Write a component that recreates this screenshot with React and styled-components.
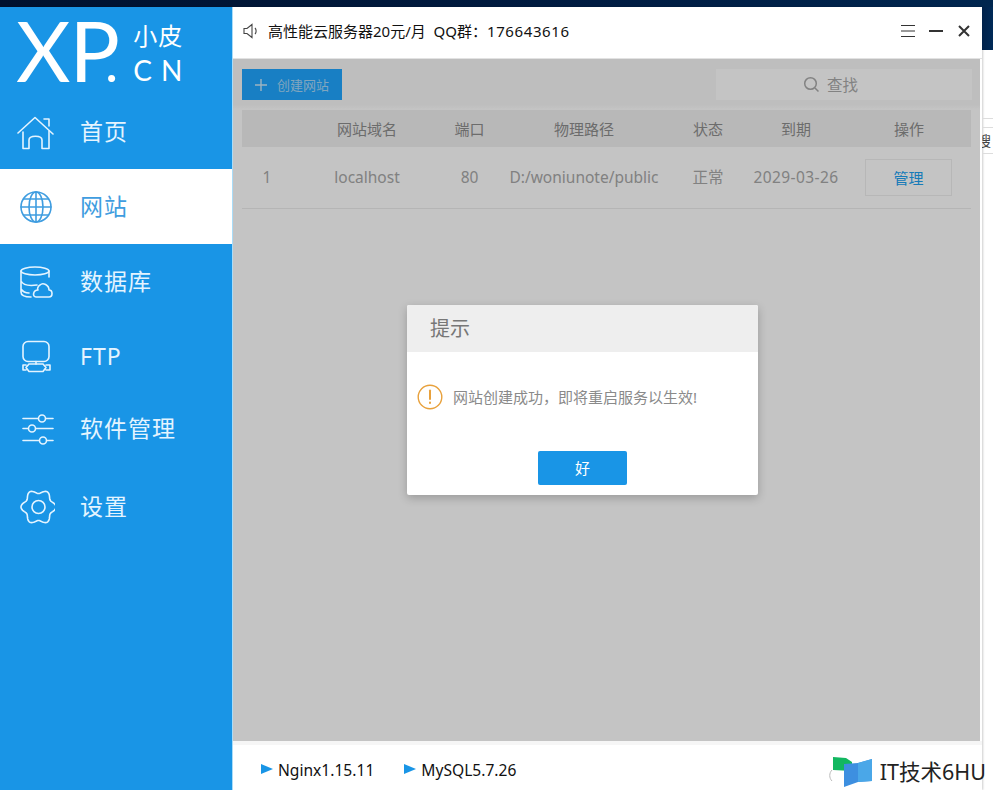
import React from "react";
import styled, { createGlobalStyle } from "styled-components";

const Global = createGlobalStyle`
  html, body { margin: 0; padding: 0; background: #fff; }
  * { box-sizing: border-box; }
  body { font-family: "Noto Sans", "Noto Sans CJK SC", sans-serif; }
`;

const CJK = `"Noto Sans", "Noto Sans CJK SC", sans-serif`;

const Page = styled.div`
  width: 993px; height: 790px; overflow: hidden; position: relative;
  display: flex; flex-direction: column; background: #fff;
`;
const TopStrip = styled.div`
  height: 7px; flex: none;
  background: linear-gradient(90deg, #00112e, #001c42 60%, #00264f);
`;
const Desk = styled.div`display: flex; flex: 1; min-height: 0;`;
const Windowed = styled.div`
  width: 982px; flex: none; display: flex; box-shadow: 1px 0 2px rgba(0,0,0,.2);
`;
const Sidebar = styled.nav`width: 232px; flex: none; background: #1995e6; display: flex; flex-direction: column;`;
const Logo = styled.div`height: 87px; display: flex; padding-left: 16px; color: #fff;`;
const LogoMark = styled.div`
  font: 400 84px/85px Lato, sans-serif; letter-spacing: -1px; height: 85px; flex: none; white-space: nowrap;
`;
const LogoDot = styled.span`font-size: 56px; margin-left: -14px; letter-spacing: 0;`;
const LogoSide = styled.div`
  margin-left: 15px; display: flex; flex-direction: column; padding-top: 13px;
`;
const LogoCn = styled.div`font: 400 24px/30px "Noto Sans CJK SC", sans-serif; letter-spacing: 1px;`;
const LogoEn = styled.div`font: 400 28px/34px Lato, sans-serif; letter-spacing: 9px; margin-top: 3px; white-space: nowrap;`;

const NavItem = styled.div`
  height: 75px; display: flex; align-items: center; padding-left: 17px;
  padding-bottom: ${p => p.$lift || 0}px;
  background: ${p => (p.$active ? "#fff" : "transparent")};
  color: ${p => (p.$active ? "#3f9de0" : "#e4f4ff")};
`;
const NavLabel = styled.span`
  margin: 0 0 2px 25px; font: 400 23px/30px ${CJK}; letter-spacing: 1px;
`;
const IconSvg = styled.svg`
  width: 38px; height: 38px; flex: none; fill: none; stroke: currentColor; stroke-width: 1.6;
  stroke-linecap: round; stroke-linejoin: round;
`;

const Main = styled.main`flex: 1; min-width: 0; display: flex; flex-direction: column; border-left: 1px solid #a9dcf8;`;
const Header = styled.header`
  height: 52px; flex: none; display: flex; align-items: center; padding: 0 10px 4px 10px; background: #fff;
  border-bottom: 1px solid #e2e2e2;
`;
const Notice = styled.div`
  margin-left: 10px; font: 400 15px/20px ${CJK}; color: #111; flex: 1; white-space: pre;
`;
const Digits = styled.span`letter-spacing: .6px;`;
const WinBtn = styled.svg`
  width: 16px; height: 16px; margin-left: 12px; fill: none; stroke: #333; flex: none;
`;

const Content = styled.section`
  flex: 1; min-height: 0; position: relative; padding: 10px 8px 0 9px; margin-right: 2px;
  background: linear-gradient(#f8f8f8, #f8f8f8 46px, #fff 50px);
`;
const Toolbar = styled.div`display: flex; justify-content: space-between; height: 31px; width: 730px;`;
const CreateBtn = styled.div`
  width: 100px; height: 31px; background: #20a6ff; color: #a8d8f8; display: flex; align-items: center;
  padding-left: 12px; font: 400 13px/16px ${CJK};
  svg { margin-right: 9px; }
`;
const SearchBox = styled.div`
  width: 256px; height: 31px; background: #fff; color: #aaa; display: flex; align-items: center;
  padding-left: 87px; font: 400 15.5px/18px ${CJK};
  svg { margin-right: 7px; }
`;
const Grid = styled.div`
  display: grid; grid-template-columns: 50px 150px 55px 174px 74px 102px 124px; width: 729px; align-items: center;
  justify-items: center;
`;
const HeadRow = styled(Grid)`
  margin-top: 10px; height: 37px; background: #f0f0f0; color: #8d8d8d; font: 400 15px/20px ${CJK};
`;
const BodyRow = styled(Grid)`
  height: 62px; color: #a8a8a8; font: 400 15.5px/20px ${CJK}; border-bottom: 1px solid #ececec; padding-bottom: 1px;
`;
const DateCell = styled.span`letter-spacing: .4px;`;
const ManageBtn = styled.div`
  width: 87px; height: 37px; border: 1px solid #eee; color: #20a0f0; display: flex; align-items: center;
  justify-content: center; font: 400 15px/20px ${CJK}; margin-right: 1px; padding-top: 2px;
`;
const Dim = styled.div`position: absolute; inset: 0; background: rgba(0,0,0,.23);`;
const Dialog = styled.div`
  position: absolute; left: 174px; top: 246px; width: 351px; height: 190px; background: #fff; border-radius: 2px;
  box-shadow: 0 3px 10px rgba(0,0,0,.22); display: flex; flex-direction: column; overflow: hidden;
`;
const DialogHead = styled.div`
  height: 47px; flex: none; background: #eee; color: #777; padding-left: 23px; display: flex; align-items: center;
  font: 400 20px/24px ${CJK};
`;
const DialogBody = styled.div`
  flex: 1; display: flex; align-items: flex-start; padding: 32px 0 0 10px; color: #8a8a8a; font: 400 15px/26px ${CJK};
`;
const DialogText = styled.span`margin-left: 10px; white-space: nowrap;`;
const OkBtn = styled.div`
  width: 89px; height: 34px; margin: 0 0 10px 131px; background: #1995e6; color: #fff; border-radius: 2px;
  display: flex; align-items: center; justify-content: center; font: 400 15px/20px ${CJK}; flex: none;
`;

const Footer = styled.footer`
  height: 49px; flex: none; background: #fff; border-top: 4px solid #f6f6f6; display: flex; align-items: center;
  padding: 5px 0 0 28px; font: 400 15.6px/20px ${CJK}; color: #111;
`;
const Service = styled.div`
  display: flex; align-items: center; margin-right: 30px;
  &::before {
    content: ""; width: 0; height: 0; margin-right: 5px; margin-top: -3px;
    border-left: 12px solid #1995e6; border-top: 5.5px solid transparent; border-bottom: 5.5px solid transparent;
  }
`;

const Behind = styled.aside`
  flex: 1; min-width: 0; display: flex; flex-direction: column; overflow: hidden;
`;
const BehindTop = styled.div`
  height: 43px; flex: none;
  background: linear-gradient(90deg, #00214a, #002a58);
`;
const BehindTab = styled.div`
  margin-top: 68px; height: 9px; border-top: 1px solid #ddd;
`;
const BehindField = styled.div`
  height: 27px; border: 1px solid #ddd; border-width: 1px 0; font: 400 14px/25px "Noto Sans CJK SC", sans-serif; color: #444;
  text-indent: -5px; white-space: nowrap; overflow: hidden;
`;

const Watermark = styled.div`
  position: absolute; right: 7px; bottom: 3px; display: flex; align-items: center; color: #222;
  font: 400 21.5px/30px ${CJK};
  svg { margin-right: 7px; }
`;

const House = () => (
  <IconSvg viewBox="0 0 38 38">
    <path d="M1 20 L18 4.5 L36 21 M27 6 h5 v7" />
    <path d="M6 19 V35.5 H12 V27 C12 22 25 22 25 27 V35.5 H32 V18" />
  </IconSvg>
);
const Globe = () => (
  <IconSvg viewBox="0 0 38 38">
    <circle cx="19" cy="19" r="15" />
    <ellipse cx="19" cy="19" rx="7" ry="15" />
    <path d="M19 4 V34 M4 19 H34 M6.5 11 H31.5 M6.5 27 H31.5" />
  </IconSvg>
);
const Database = () => (
  <IconSvg viewBox="0 0 38 38">
    <ellipse cx="18" cy="8" rx="14" ry="4" />
    <path d="M4 8 V29 C4 32 8 34 14 34 M32 8 V14 M4 18 C6 22 13 23 20 22 M4 26 C6 29 9 30 12 30" />
    <path d="M19 34 H32 C36 34 36 27 32 27 C32 22 26 19 23 22 C21 23 20 26 21 27 C16 27 15 34 19 34" />
  </IconSvg>
);
const Network = () => (
  <IconSvg viewBox="0 0 38 38">
    <rect x="6" y="3.5" width="26" height="20" rx="5" />
    <path d="M19 23.5 V26" />
    <path d="M12 26 H26 L29 29.5 L26 33.5 H12 L9 29.5 Z M9 27 H6 V32 H9 M29 27 H33 V32 H29" />
  </IconSvg>
);
const Sliders = () => (
  <IconSvg viewBox="0 0 38 38">
    <path d="M6 8.5 H21 M29 8.5 H36 M6 18.5 H11 M19 18.5 H36 M6 30.5 H22 M30 30.5 H36" />
    <circle cx="25" cy="8.5" r="3.5" /><circle cx="15" cy="18.5" r="3.5" /><circle cx="26" cy="30.5" r="3.5" />
  </IconSvg>
);
const gearPath = (() => {
  const pts = [];
  for (let i = 0; i < 120; i++) {
    const t = (i / 120) * Math.PI * 2;
    const r = 15.5 + 2 * Math.cos(6 * t);
    pts.push(`${(21.5 + r * Math.cos(t)).toFixed(2)} ${(19 + r * Math.sin(t)).toFixed(2)}`);
  }
  return "M" + pts.join(" L") + " Z";
})();
const Gear = () => (
  <IconSvg viewBox="0 0 38 38">
    <path d={gearPath} />
    <circle cx="21.5" cy="19" r="6.5" />
  </IconSvg>
);

const items = [
  { label: "首页", Icon: House },
  { label: "网站", Icon: Globe, active: true },
  { label: "数据库", Icon: Database },
  { label: "FTP", Icon: Network },
  { label: "软件管理", Icon: Sliders, lift: 6 },
  { label: "设置", Icon: Gear },
];

export default function App() {
  return (
    <Page>
      <Global />
      <TopStrip />
      <Desk>
        <Windowed>
          <Sidebar>
            <Logo>
              <LogoMark>XP<LogoDot>.</LogoDot></LogoMark>
              <LogoSide>
                <LogoCn>小皮</LogoCn>
                <LogoEn>CN</LogoEn>
              </LogoSide>
            </Logo>
            {items.map(({ label, Icon, active, lift }) => (
              <NavItem key={label} $active={active} $lift={lift}>
                <Icon />
                <NavLabel>{label}</NavLabel>
              </NavItem>
            ))}
          </Sidebar>
          <Main>
            <Header>
              <svg width="15" height="16" viewBox="0 0 15 16" fill="none" stroke="#444" strokeWidth="1.1">
                <path d="M1 5.5 H4 L9 1.5 V14.5 L4 10.5 H1 Z M12 5 C13.5 6.5 13.5 9.5 12 11" />
              </svg>
              <Notice>高性能云服务器20元/月  QQ群：<Digits>176643616</Digits></Notice>
              <WinBtn viewBox="0 0 16 16"><path d="M1 2.5 H15 M1 8 H15 M1 13.5 H15" /></WinBtn>
              <WinBtn viewBox="0 0 16 16" strokeWidth="2"><path d="M1 8 H15" /></WinBtn>
              <WinBtn viewBox="0 0 16 16" strokeWidth="2"><path d="M3 3 L13 13 M13 3 L3 13" /></WinBtn>
            </Header>
            <Content>
              <Toolbar>
                <CreateBtn>
                  <svg width="14" height="14" viewBox="0 0 14 14" stroke="#cdeafc" strokeWidth="1.4"><path d="M7 1 V13 M1 7 H13" /></svg>
                  创建网站
                </CreateBtn>
                <SearchBox>
                  <svg width="17" height="17" viewBox="0 0 17 17" fill="none" stroke="#aaa" strokeWidth="1.5"><circle cx="7.5" cy="7.5" r="5.8" /><path d="M12 12 L15.5 15.5" /></svg>
                  查找
                </SearchBox>
              </Toolbar>
              <HeadRow>
                <span /><span>网站域名</span><span>端口</span><span>物理路径</span><span>状态</span><span>到期</span><span>操作</span>
              </HeadRow>
              <BodyRow>
                <span>1</span><span>localhost</span><span>80</span><span>D:/woniunote/public</span><span>正常</span><DateCell>2029-03-26</DateCell>
                <ManageBtn>管理</ManageBtn>
              </BodyRow>
              <Dim />
              <Dialog>
                <DialogHead>提示</DialogHead>
                <DialogBody>
                  <svg width="26" height="26" viewBox="0 0 26 26" fill="none" stroke="#e8a13c" strokeWidth="1.4" strokeLinecap="round">
                    <circle cx="13" cy="13" r="11.8" /><path d="M13 6.5 V15" strokeWidth="2" /><path d="M13 18.5 V19" strokeWidth="2" />
                  </svg>
                  <DialogText>网站创建成功，即将重启服务以生效!</DialogText>
                </DialogBody>
                <OkBtn>好</OkBtn>
              </Dialog>
            </Content>
            <Footer>
              <Service>Nginx1.15.11</Service>
              <Service>MySQL5.7.26</Service>
            </Footer>
          </Main>
        </Windowed>
        <Behind>
          <BehindTop />
          <BehindTab />
          <BehindField>搜</BehindField>
        </Behind>
      </Desk>
      <Watermark>
        <svg width="45" height="31" viewBox="0 0 45 31">
          <path d="M4 14 C1 17 1 22 4 25" fill="none" stroke="#bbb" strokeWidth="1" />
          <path d="M5 1 L18 2 L24 6 L24 15 L5 14 Z" fill="#12b760" />
          <path d="M16 8 L30 7 L44 3 V25 L30 26 L16 31 Z" fill="#3d8fe0" />
          <path d="M30 7 L44 3 V25 L30 26 Z" fill="#4aa7e8" />
        </svg>
        IT技术6HU
      </Watermark>
    </Page>
  );
}
